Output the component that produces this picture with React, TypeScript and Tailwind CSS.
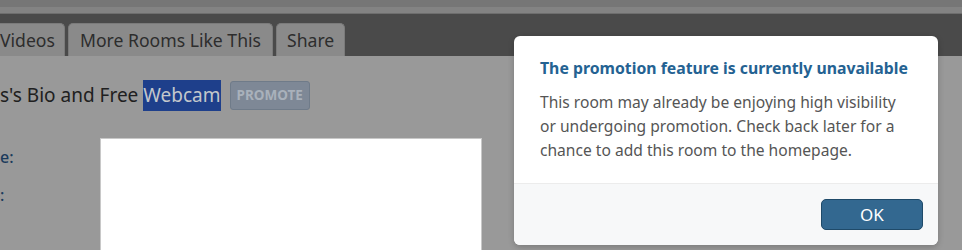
import React from "react";

const FONT = "font-['Noto_Sans','Open_Sans',sans-serif]";

function Tab({ label, className }: { label: string; className?: string }) {
  return (
    <div
      className={`h-[33px] rounded-t-[5px] border border-b-0 border-[#7b7b7b] bg-[#8a8a8a] text-[17.6px] leading-[32px] text-[#2d2d2d] ${className ?? ""}`}
    >
      {label}
    </div>
  );
}

export default function App() {
  return (
    <div className={`relative h-[250px] w-[962px] overflow-hidden bg-[#999999] ${FONT}`}>
      {/* page behind the dialog */}
      <div className="h-[7px] bg-[#767676]" />
      <div className="h-[7px] border-b border-[#6e6e6e] bg-[#838383]" />
      <div className="flex h-[42px] items-end gap-[3px] bg-[#4a4a4a]">
        <Tab label="Videos" className="-ml-[6px] w-[71px] pl-[5px]" />
        <Tab label="More Rooms Like This" className="w-[205px] px-[11px]" />
        <Tab label="Share" className="w-[69px] px-[10px]" />
      </div>

      <div className="flex items-center gap-[9px] pt-[24px] text-[19px] text-[#202020]">
        <div className="flex items-center">
          <span>s's Bio and Free&nbsp;</span>
          <span className="bg-[#1e3f8b] leading-[31px] text-[#c3c7cc]">Webcam</span>
        </div>
        <div className="rounded-[3px] border border-[#6f7b89] bg-[#7e8896] px-[6px] text-[13.5px] font-bold leading-[27px] text-[#a9b1bb]">
          PROMOTE
        </div>
      </div>

      <div className="mt-[27px] flex gap-[80px]">
        <div className="w-[20px] text-[16px] font-medium leading-[38px] text-[#1b3b5c]">
          <div>e:</div>
          <div>:</div>
        </div>
        <div className="h-[120px] w-[382px] border border-[#c8c8c8] bg-white" />
      </div>

      {/* dialog */}
      <div className="absolute left-[514px] top-[36px] flex h-[209px] w-[424px] flex-col overflow-hidden rounded-[6px] bg-white shadow-[0_2px_6px_rgba(0,0,0,0.2)]">
        <div className="px-[26px] pt-[20px]">
          <div className="text-[15.8px] font-bold leading-[24px] text-[#246292]">
            The promotion feature is currently unavailable
          </div>
          <p className="mt-[10px] text-[15.6px] leading-[24px] text-[#555555]">
            This room may already be enjoying high visibility or undergoing promotion. Check back later for a
            chance to add this room to the homepage.
          </p>
        </div>
        <div className="mt-auto flex h-[62px] items-center justify-end border-t border-[#ececec] bg-[#f7f8f9] pr-[15px]">
          <button className="h-[31px] w-[102px] rounded-[5px] border border-[#1f4a69] bg-[#336890] text-[17px] text-white">
            OK
          </button>
        </div>
      </div>
    </div>
  );
}
